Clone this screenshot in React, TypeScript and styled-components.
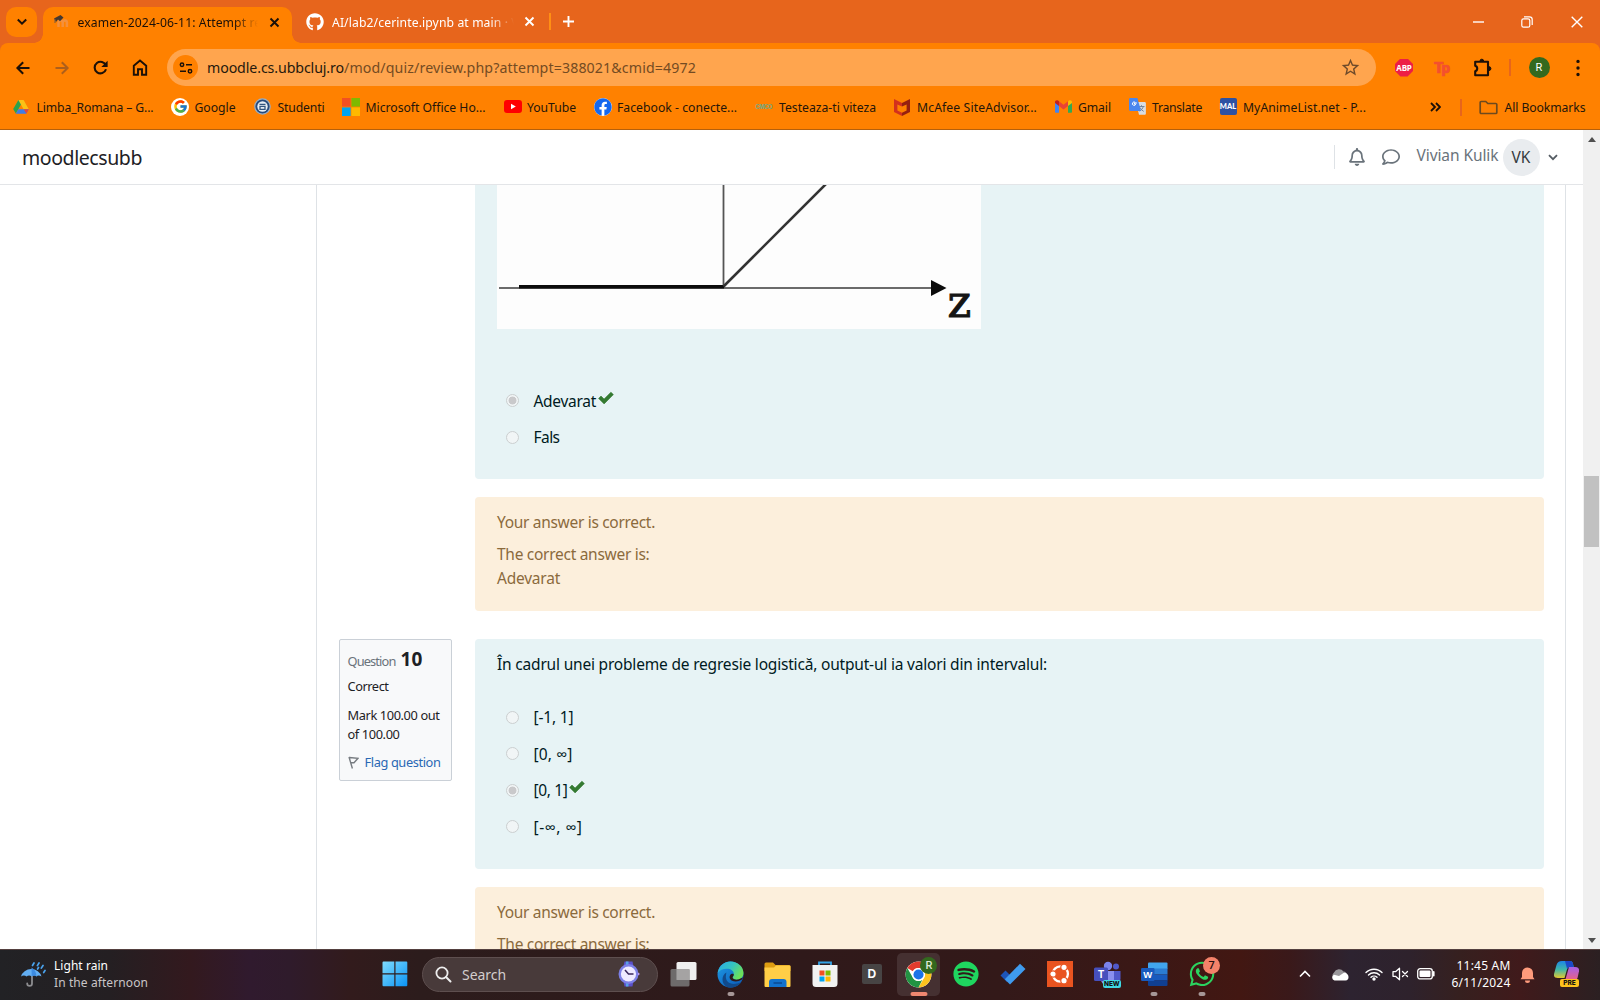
import React, { useLayoutEffect, useRef, useState } from "react";
import styled, { createGlobalStyle } from "styled-components";
import { FaFacebook, FaGithub, FaRegBell, FaRegComment, FaSpotify, FaWhatsapp } from "react-icons/fa";
import { FcGoogle } from "react-icons/fc";
import { MdStarBorder } from "react-icons/md";

const UI_FONT = `"Segoe UI", "Noto Sans", "Open Sans", sans-serif`;

const Global = createGlobalStyle`
  * { box-sizing: border-box; }
  html, body { margin: 0; padding: 0; background: #fff; }
  body { font-family: ${UI_FONT}; overflow: hidden; }
  svg { display: block; flex: none; }
`;

/* ---------- text set to a known measure ---------- */

const Run = styled.span<{ $size: number; $color?: string; $weight?: number; $w: number; $top?: number }>`
  display: block;
  flex: none;
  width: ${(p) => p.$w}px;
  margin-top: ${(p) => p.$top ?? 0}px;
  font-size: ${(p) => p.$size}px;
  font-weight: ${(p) => p.$weight ?? 400};
  color: ${(p) => p.$color ?? "inherit"};
  line-height: 1.5;
  white-space: pre;
`;

type TextProps = { w: number; size: number; color?: string; weight?: number; top?: number; children: string };

function Text({ w, size, color, weight, top, children }: TextProps) {
  const ref = useRef<HTMLSpanElement>(null);
  const [tracking, setTracking] = useState(0);
  useLayoutEffect(() => {
    const el = ref.current;
    if (!el) return;
    const range = document.createRange();
    range.selectNodeContents(el);
    setTracking((w - range.getBoundingClientRect().width) / children.length);
  }, [w, children]);
  return (
    <Run ref={ref} $w={w} $size={size} $color={color} $weight={weight} $top={top} style={{ letterSpacing: tracking }}>
      {children}
    </Run>
  );
}

/* ---------- window ---------- */

const Screen = styled.div`
  width: 1600px;
  height: 1000px;
  display: flex;
  flex-direction: column;
  overflow: hidden;
  background: #fff;
`;

const Gap = styled.div<{ $w: number }>`
  flex: none;
  width: ${(p) => p.$w}px;
`;

const Spacer = styled.div`
  flex: 1;
`;

const TabStrip = styled.div`
  height: 43px;
  flex: none;
  display: flex;
  align-items: center;
  padding-left: 6px;
  background: #e7651c;
  color: #fff;
`;

const TabSearch = styled.div`
  width: 31px;
  height: 30px;
  border-radius: 10px;
  background: #ff8100;
  color: #1b1008;
  display: flex;
  align-items: center;
  justify-content: center;
`;

const ActiveTab = styled.div`
  position: relative;
  align-self: flex-end;
  margin-left: 6px;
  width: 249px;
  height: 36px;
  padding: 0 8px 6px 10px;
  border-radius: 10px 10px 0 0;
  background: #ff8100;
  display: flex;
  align-items: center;
  color: #1b1008;
  &::before,
  &::after {
    content: "";
    position: absolute;
    bottom: 0;
    width: 9px;
    height: 9px;
  }
  &::before {
    left: -9px;
    background: radial-gradient(circle at 0 0, transparent 8.5px, #ff8100 9px);
  }
  &::after {
    right: -9px;
    background: radial-gradient(circle at 100% 0, transparent 8.5px, #ff8100 9px);
  }
`;

const Clip = styled.div<{ $w: number }>`
  width: ${(p) => p.$w}px;
  flex: none;
  overflow: hidden;
  mask-image: linear-gradient(to right, #000 calc(100% - 24px), transparent);
`;

const Rule = styled.div<{ $h: number; $color: string; $w?: number }>`
  flex: none;
  width: ${(p) => p.$w ?? 2}px;
  height: ${(p) => p.$h}px;
  background: ${(p) => p.$color};
`;

const ToolbarBack = styled.div`
  flex: none;
  background: #e7651c;
`;

const Toolbar = styled.div`
  height: 49px;
  display: flex;
  align-items: center;
  padding-left: 13px;
  background: #ff8100;
  border-radius: 8px 8px 0 0;
  color: #1b1008;
`;

const Omnibox = styled.div`
  width: 1209px;
  height: 37px;
  border-radius: 19px;
  background: #ffa54e;
  display: flex;
  align-items: center;
  padding: 0 15px 0 6px;
`;

const SiteInfo = styled.div`
  width: 25px;
  height: 25px;
  border-radius: 50%;
  background: #ff8100;
  display: flex;
  align-items: center;
  justify-content: center;
`;

const Abp = styled.div`
  width: 18px;
  height: 18px;
  background: #ed1e45;
  clip-path: polygon(30% 0, 70% 0, 100% 30%, 100% 70%, 70% 100%, 30% 100%, 0 70%, 0 30%);
  color: #fff;
  font: 700 8px/18px "Open Sans", sans-serif;
  text-align: center;
  letter-spacing: -0.2px;
`;

const Tp = styled.div`
  width: 17px;
  font: 900 15px/18px Roboto, sans-serif;
  letter-spacing: -1.2px;
  color: #f4502e;
  -webkit-text-stroke: 0.7px #f4502e;
`;

const Profile = styled.div`
  width: 21px;
  height: 21px;
  border-radius: 50%;
  background: #33691e;
  color: #fff;
  font: 400 11px/21px Roboto, sans-serif;
  text-align: center;
`;

const Bookmarks = styled.div`
  height: 38px;
  flex: none;
  display: flex;
  align-items: center;
  padding: 0 0 7px 13px;
  background: #ff8100;
  border-bottom: 1px solid #b5600c;
  color: #25160a;
`;

const BookmarkItem = styled.div<{ $w: number }>`
  flex: none;
  width: ${(p) => p.$w}px;
  display: flex;
  align-items: center;
`;

const BookmarkIcon = styled.div`
  flex: none;
  width: 23.5px;
`;

const Disc = styled.div`
  width: 18px;
  height: 18px;
  border-radius: 50%;
  background: #fff;
  display: flex;
  align-items: center;
  justify-content: center;
`;

const Mal = styled.div`
  width: 17px;
  height: 17px;
  border-radius: 2px;
  background: #2e51a2;
  color: #fff;
  font: 900 7.5px/17px Lato, sans-serif;
  text-align: center;
`;

const Cmco = styled.div`
  width: 17px;
  font: 800 5.5px/8px Inter, sans-serif;
  letter-spacing: -0.2px;
  color: #7aa67c;
`;

/* ---------- page ---------- */

const Viewport = styled.div`
  flex: 1;
  min-height: 0;
  display: flex;
`;

const Document = styled.div`
  width: 1583px;
  display: flex;
  flex-direction: column;
`;

const SiteHeader = styled.header`
  height: 55px;
  flex: none;
  border-bottom: 1px solid #e3e5e8;
  display: flex;
  align-items: center;
  padding-left: 22px;
  color: #6a737b;
`;

const UserInitials = styled.div`
  width: 37px;
  height: 37px;
  margin-left: 4px;
  border-radius: 50%;
  background: #e9ecef;
  color: #343a40;
  display: flex;
  align-items: center;
  justify-content: center;
`;

const Body = styled.main`
  flex: 1;
  min-height: 0;
  overflow: hidden;
  margin: 0 17px 0 316px;
  border: 0 solid #dee2e6;
  border-width: 0 1px;
  padding: 0 21px 0 22px;
`;

const Question = styled.section`
  display: flex;
  align-items: flex-start;
  margin-bottom: 28px;
`;

const InfoColumn = styled.div`
  width: 136px;
  flex: none;
`;

const InfoCard = styled.div`
  width: 113px;
  height: 142px;
  border: 1px solid #cad0d7;
  border-radius: 2px;
  background: #f8f9fa;
  padding: 0 7.5px;
  color: #1d2125;
`;

const InfoLine = styled.div<{ $h: number }>`
  height: ${(p) => p.$h}px;
  display: flex;
  align-items: center;
`;

const QuestionColumn = styled.div`
  flex: 1;
`;

const Formulation = styled.div<{ $h: number; $cut?: boolean }>`
  height: ${(p) => p.$h}px;
  padding: 0 22px;
  border-radius: ${(p) => (p.$cut ? "0 0 4px 4px" : "4px")};
  background: #e7f3f5;
  color: #001a1e;
`;

const Feedback = styled.div`
  height: 114px;
  margin-top: 18px;
  padding: 14px 22px 0;
  border-radius: 4px;
  background: #fcefdc;
  color: #8b6a3c;
`;

const Line = styled.div<{ $after?: number }>`
  height: 24px;
  margin-bottom: ${(p) => p.$after ?? 0}px;
  display: flex;
  align-items: center;
`;

const Figure = styled.svg`
  width: 484px;
  height: 144px;
  background: #fdfdfd;
`;

const Answers = styled.div<{ $top: number }>`
  padding: ${(p) => p.$top}px 0 0 9px;
`;

const Answer = styled.div`
  height: 36.4px;
  display: flex;
  align-items: center;
`;

const Radio = styled.div<{ $on?: boolean }>`
  width: 13px;
  height: 13px;
  margin-right: 14.5px;
  border: 1px solid #cbcfd0;
  border-radius: 50%;
  background: ${(p) => (p.$on ? "radial-gradient(circle, #c9c9cb 3.6px, #f1f5f6 4.3px)" : "#f1f5f6")};
`;

const Tick = styled.div`
  margin: -6px 0 0 1.5px;
`;

const ScrollTrack = styled.div`
  width: 17px;
  background: #f0f0f0;
  display: flex;
  flex-direction: column;
  align-items: center;
`;

const ScrollArrow = styled.div<{ $down?: boolean }>`
  width: 0;
  height: 0;
  margin: ${(p) => (p.$down ? "auto 0 6px" : "7px 0 0")};
  border: 4px solid transparent;
  border-width: ${(p) => (p.$down ? "5px 4px 0" : "0 4px 5px")};
  border-color: ${(p) => (p.$down ? "#505050 transparent transparent" : "transparent transparent #505050")};
`;

const Thumb = styled.div`
  width: 15px;
  height: 71px;
  margin-top: 334px;
  background: #c1c1c1;
`;

/* ---------- taskbar ---------- */

const Taskbar = styled.footer`
  height: 51px;
  flex: none;
  display: flex;
  align-items: center;
  padding: 0 0 2px 20px;
  border-top: 1px solid #54403f;
  background: linear-gradient(90deg, #222225 0, #241f22 110px, #33191e 190px, #301a2e 250px, #2f1b2b 290px, #321b1c 350px, #2c1c1c 420px, #2f191a 800px, #331919 1000px, #3a1816 1130px, #421712 1240px, #3a191a 1290px, #2d2330 1350px, #2e222c 1410px, #36201f 1460px, #401a1b 1520px, #2b2022 1600px);
  color: #fff;
`;

const TwoLines = styled.div<{ $right?: boolean }>`
  display: flex;
  flex-direction: column;
  align-items: ${(p) => (p.$right ? "flex-end" : "flex-start")};
`;

const ShortLine = styled.div`
  height: 17px;
  display: flex;
  align-items: center;
`;

const SearchPill = styled.div`
  width: 236px;
  height: 35px;
  border-radius: 18px;
  border: 1px solid #5e4f4f;
  background: #483a3a;
  display: flex;
  align-items: center;
  padding: 0 16px 0 12px;
`;

const AppSlot = styled.div<{ $active?: boolean }>`
  position: relative;
  flex: none;
  width: 43px;
  height: 43px;
  margin-right: 4.1px;
  border-radius: 5px;
  display: flex;
  align-items: center;
  justify-content: center;
  background: ${(p) => (p.$active ? "#453031" : "transparent")};
`;

const Running = styled.div<{ $active?: boolean }>`
  position: absolute;
  bottom: 0;
  left: 50%;
  transform: translateX(-50%);
  width: ${(p) => (p.$active ? 17 : 7)}px;
  height: 4px;
  border-radius: 2px;
  background: ${(p) => (p.$active ? "#f08770" : "#a69797")};
`;

const Badge = styled.div<{ $bg: string; $fg: string }>`
  position: absolute;
  top: 4px;
  right: 3px;
  width: 17px;
  height: 17px;
  border-radius: 50%;
  background: ${(p) => p.$bg};
  color: ${(p) => p.$fg};
  font: 500 11px/17px Roboto, sans-serif;
  text-align: center;
`;

const Pill = styled.div<{ $bg: string; $w: number }>`
  position: absolute;
  width: ${(p) => p.$w}px;
  height: 8px;
  border-radius: 2px;
  background: ${(p) => p.$bg};
  color: #111;
  font: 800 6.5px/8px Inter, sans-serif;
  text-align: center;
`;

const NewPill = styled(Pill)`
  left: 17px;
  bottom: 8px;
`;

const PrePill = styled(Pill)`
  left: 6px;
  bottom: 0;
`;

const LetterTile = styled.div`
  width: 20px;
  height: 20px;
  border-radius: 2px;
  background: #474444;
  color: #fff;
  font: 700 12px/20px "Liberation Sans", sans-serif;
  text-align: center;
`;

const Copilot = styled.div`
  position: relative;
  width: 26px;
  height: 26px;
`;

/* ---------- drawings ---------- */

const Svg = ({ w, h, box, children }: { w: number; h: number; box?: string; children: React.ReactNode }) => (
  <svg width={w} height={h} viewBox={box ?? `0 0 ${w} ${h}`} fill="none">
    {children}
  </svg>
);

const CloseIcon = () => (
  <Svg w={15} h={15}><path d="M3.500 3.500l8 8M11.500 3.500l-8 8" stroke="currentColor" strokeWidth="1.900" /></Svg>
);

const PlusIcon = () => (
  <Svg w={17} h={17}><path d="M8.500 3v11M3 8.500h11" stroke="currentColor" strokeWidth="1.900" /></Svg>
);

const DownIcon = () => (
  <Svg w={12} h={8}><path d="M1.800 1.500L6 5.700l4.200-4.200" stroke="currentColor" strokeWidth="2" /></Svg>
);

const BackIcon = () => (
  <Svg w={20} h={20}><path d="M16.500 10H5M10.200 4.200L4.400 10l5.800 5.800" stroke="currentColor" strokeWidth="2" /></Svg>
);

const ForwardIcon = () => (
  <Svg w={20} h={20}><path d="M3.500 10H15M9.800 4.200l5.800 5.800-5.800 5.800" stroke="#ad5f1b" strokeWidth="2" /></Svg>
);

const ReloadIcon = () => (
  <Svg w={21} h={21}>
    <path d="M15.900 8.600A5.800 5.800 0 1 0 16 12.300" stroke="currentColor" strokeWidth="2.100" />
    <path d="M17.600 3.800v6.300h-6.300z" fill="currentColor" />
  </Svg>
);

const CheckIcon = () => (
  <Svg w={16} h={14}>
    <path d="M.6 7.400L3 5l3.100 3.100L12.900 1.200l2.500 2.400-9.300 9.300z" fill="#357a32" stroke="#357a32" strokeWidth=".6" strokeLinejoin="round" />
  </Svg>
);

const DriveIcon = () => (
  <Svg w={16} h={16}>
    <path d="M5.4 1h5.2L5.3 10.3 2.8 14.6.2 10z" fill="#2ba24c" />
    <path d="M5.4 1h5.2l5.2 9.2h-5.2z" fill="#fbc116" />
    <path d="M5.3 10.2h10.5l-2.6 4.5H2.8z" fill="#3f7de8" />
    <path d="M10.7 10.2h5.1l-2.5 4.4z" fill="#e8453c" />
  </Svg>
);

const StudentiIcon = () => (
  <Svg w={17} h={17}>
    <circle cx="8.500" cy="8.500" r="7.700" fill="#274b7c" stroke="#9fb0c2" strokeWidth="1.200" />
    <circle cx="8.500" cy="8.500" r="5.200" fill="#e8eef4" />
    <path d="M5.500 6.300h6M6 8.300h5v3H6z" stroke="#33567f" strokeWidth="1.300" />
  </Svg>
);

const MicrosoftIcon = () => (
  <Svg w={18} h={18}>
    <path d="M0 0h8.600v8.600H0z" fill="#f25022" />
    <path d="M9.400 0H18v8.600H9.400z" fill="#7fba00" />
    <path d="M0 9.400h8.600V18H0z" fill="#00a4ef" />
    <path d="M9.400 9.400H18V18H9.400z" fill="#ffb900" />
  </Svg>
);

const YouTubeIcon = () => (
  <Svg w={18} h={13}>
    <rect width="18" height="13" rx="3" fill="#f00" />
    <path d="M7 3.800v5.400l4.800-2.700z" fill="#fff" />
  </Svg>
);

const McAfeeIcon = () => (
  <Svg w={16} h={18}>
    <path d="M0 1l8 4v3.600L3.400 6.400v6.200L8 14.800V18l-8-4z" fill="#d3301d" />
    <path d="M16 1L8 5v3.600l4.600-2.200v6.200L8 14.800V18l8-4z" fill="#96200f" />
  </Svg>
);

const GmailIcon = () => (
  <Svg w={17} h={13}>
    <path d="M0 2v9.700c0 .6.500 1.100 1.100 1.100H4V5z" fill="#4285f4" />
    <path d="M17 2v9.700c0 .6-.5 1.100-1.100 1.100H13V5z" fill="#34a853" />
    <path d="M13 1.400V6l4-3V2c0-1.600-1.800-2.300-3-1.500z" fill="#fbbc04" />
    <path d="M4 6V1.300l4.500 3.400L13 1.300V6L8.500 9.400z" fill="#ea4335" />
    <path d="M0 2v1l4 3V1.300L3 .5C1.700-.3 0 .5 0 2z" fill="#c5221f" />
  </Svg>
);

const TranslateIcon = () => (
  <Svg w={17} h={17}>
    <path d="M7 4h8.500c.8 0 1.400.6 1.400 1.400v10c0 .8-.6 1.400-1.400 1.400H10z" fill="#d9dde3" />
    <path d="M9.500 8.500h6M12.500 7.200v1.300M14.300 8.500c-.6 2.200-2 3.700-3.800 4.700M11 9.500c.8 1.700 2 3 3.700 3.900" stroke="#6b7f95" strokeWidth=".9" />
    <path d="M1.400 0h7L12 12.900H1.400C.6 12.900 0 12.300 0 11.500v-10C0 .7.600 0 1.400 0z" fill="#4a86ee" />
    <path d="M7.900 5H5.400v1.200h1.300a1.700 1.700 0 1 1-.4-1.700" stroke="#fff" strokeWidth="1" />
  </Svg>
);

const MoodleFavicon = () => (
  <Svg w={16} h={16}>
    <path d="M5.500 13V8.500a2 2 0 0 1 4.200 0V13M9.700 8.500a2 2 0 0 1 4.200 0V13" stroke="#f4903c" strokeWidth="2.500" />
    <path d="M1 4.500L7.500 1l3 2.500L7 7.200 5 5.500 3 8z" fill="#46382f" />
    <path d="M2 5v4" stroke="#7b5a3c" />
  </Svg>
);

const HomeIcon = () => (
  <Svg w={16} h={17}>
    <path d="M1.800 6.800L8 1.600l6.200 5.200V15.800H10V10.200H6v5.600H1.800z" stroke="currentColor" strokeWidth="1.900" />
  </Svg>
);

const TuneIcon = () => (
  <Svg w={14} h={14}>
    <circle cx="3" cy="3.800" r="1.700" stroke="currentColor" strokeWidth="1.500" />
    <path d="M7 3.800h6M1 10.200h6" stroke="currentColor" strokeWidth="1.600" />
    <circle cx="11" cy="10.200" r="1.700" stroke="currentColor" strokeWidth="1.500" />
  </Svg>
);

const PuzzleIcon = () => (
  <Svg w={19} h={20}>
    <path d="M2.200 3.800H15v13.500H2.200V13.300c2.700-.8 2.700-4.700 0-5.500z" stroke="currentColor" strokeWidth="2.100" strokeLinejoin="round" />
    <path d="M7 3a1.800 1.800 0 0 1 3.600 0zM16 8.700a1.900 1.900 0 0 1 0 3.800z" fill="currentColor" stroke="currentColor" />
  </Svg>
);

const WeatherIcon = () => (
  <Svg w={26} h={27}>
    <path d="M12 15.500v7a2.400 2.400 0 0 1-4.800 0" stroke="#8d8d90" strokeWidth="1.800" strokeLinecap="round" />
    <path d="M1 15.500A10.500 9.500 0 0 1 21.500 15.500c-2-1.200-4-1.200-5 0-1.400-1.200-3-1.200-4.800 0-1.700-1.200-3.600-1.200-5.200 0-1.500-1.200-3.700-1.200-5.500 0z" fill="#62aef2" />
    <path d="M11.500 6.500c3 1.500 4.800 5 5 9-1.400-1.200-3-1.200-4.800 0z" fill="#3d8be0" />
    <path d="M14 2l-1.500 2.500M19 2l-1.600 2.600M23 4.500l-1.700 2.600M18.500 6.500L17.600 8M25 9.500l-1.300 2" stroke="#4aa3ee" strokeWidth="1.700" strokeLinecap="round" />
  </Svg>
);

const StartIcon = () => (
  <Svg w={26} h={26}>
    <defs>
      <linearGradient id="start" x1="0" y1="0" x2="1" y2="1">
        <stop offset="0" stopColor="#7fdcfd" />
        <stop offset="1" stopColor="#0a93f5" />
      </linearGradient>
    </defs>
    <path d="M.5 1.500a1 1 0 0 1 1-1h10.800v11.800H.5zM13.500.5h10.800a1 1 0 0 1 1 1v10.800H13.500zM.5 13.500h11.800v11.800H1.500a1 1 0 0 1-1-1zM13.500 13.500h11.800v10.800a1 1 0 0 1-1 1H13.500z" fill="url(#start)" />
  </Svg>
);

const WatchIcon = () => (
  <Svg w={24} h={28}>
    <path d="M7.500 1.500h8l1.200 6H6.200zM6.200 20h10.500l-1.200 6.500h-8z" fill="#5b50c9" />
    <path d="M9 1.500h2.500v6H8.500zM8.500 20h3v6.500H9z" fill="#56a4e6" />
    <circle cx="11.500" cy="14" r="10" fill="#7c7fe6" />
    <path d="M21 12.500l2 1.500-2 1.500z" fill="#c39af2" />
    <circle cx="11.500" cy="14" r="7.600" fill="#eeeaff" />
    <path d="M8 10l3.500 4h5" stroke="#38265c" strokeWidth="1.500" />
  </Svg>
);

const TaskViewIcon = () => (
  <Svg w={27} h={25}>
    <rect x="6.500" y="0" width="20" height="18" rx="1.500" fill="#efefef" />
    <rect x="0.500" y="7" width="19" height="17.500" rx="1.500" fill="#727070" fillOpacity=".95" />
    <path d="M6.500 7h13v11h-13z" fill="#a5a3a3" />
  </Svg>
);

const EdgeIcon = () => (
  <Svg w={27} h={27} box="0 0 26 26">
    <defs>
      <linearGradient id="edgeTop" x1="0" y1="0" x2="1" y2=".5">
        <stop offset="0" stopColor="#2aa8e8" />
        <stop offset=".55" stopColor="#35c5c0" />
        <stop offset="1" stopColor="#6ce05a" />
      </linearGradient>
      <linearGradient id="edgeLow" x1="0" y1="0" x2="1" y2="1">
        <stop offset="0" stopColor="#1e9be6" />
        <stop offset="1" stopColor="#0b57b5" />
      </linearGradient>
    </defs>
    <circle cx="13" cy="13" r="12.500" fill="url(#edgeLow)" />
    <path d="M8.500 15c0 5.500 5 9.500 15 5.500C20 25 14 27 9.500 25 4 22 4 14 9 11z" fill="#114a8b" />
    <path d="M.7 11.500C2 4.500 7 .5 13 .5c7 0 12.500 5 12.500 11 0 4.200-3 6.500-6.500 6.500-2.600 0-4-1-4-2 0-1.200 1.200-1.300 1.200-3.500 0-3-3-5-6.700-5C5.500 7.500 2.500 9 .7 11.500z" fill="url(#edgeTop)" />
    <path d="M14 18.800c-2-1.300-2.300-3.500-1.300-5.300.9-1.500 3.400-1.500 3.500-.5 0 1.500-1.200 2-1.200 3 0 1.300 2.500 2.400 5.500 1.900l4.300-1.900c.6 2-5.500 5.500-10.800 2.800z" fill="#2c1a1b" />
  </Svg>
);

const ExplorerIcon = () => (
  <Svg w={27} h={25}>
    <path d="M.5 2a1.500 1.500 0 0 1 1.500-1.500h7L11.500 3H25a1.500 1.500 0 0 1 1.500 1.500V9H.5z" fill="#dd9d12" />
    <path d="M.5 5.500h9.500L12 3.500h13.500a1 1 0 0 1 1 1V24a1 1 0 0 1-1 1h-24a1 1 0 0 1-1-1z" fill="#ffce47" />
    <path d="M5 25v-5a3 3 0 0 1 3-3h11.500a3 3 0 0 1 3 3v5z" fill="#1272cd" />
    <path d="M9.500 21h8.500" stroke="#0b4a91" strokeWidth="1.500" />
  </Svg>
);

const StoreIcon = () => (
  <Svg w={26} h={27}>
    <path d="M7 5.500V1.500h12v4" stroke="#35a3e6" strokeWidth="1.800" />
    <path d="M.5 4h25v18.500a3.500 3.500 0 0 1-3.500 3.500H4a3.500 3.500 0 0 1-3.500-3.500z" fill="#f2f2f2" />
    <path d="M7.500 9.500h5v5h-5z" fill="#f25022" />
    <path d="M13.500 9.500h5v5h-5z" fill="#7fba00" />
    <path d="M7.500 15.500h5v5h-5z" fill="#00a4ef" />
    <path d="M13.500 15.500h5v5h-5z" fill="#ffb900" />
  </Svg>
);

const ChromeIcon = () => (
  <Svg w={27} h={27} box="0 0 48 48">
    <circle cx="24" cy="24" r="23" fill="#fff" />
    <path d="M4.100 12.500A23 23 0 0 1 43.900 12.500H24a11.500 11.500 0 0 0-10 5.800z" fill="#e33b2e" />
    <path d="M43.900 12.500A23 23 0 0 1 24 47L34 29.800a11.500 11.500 0 0 0 0-11.500 11.500 11.500 0 0 0-10-5.800z" fill="#fcc31e" />
    <path d="M24 47A23 23 0 0 1 4.100 12.500L14 29.800a11.500 11.500 0 0 0 10 5.700 11.500 11.500 0 0 0 6.800-2.200z" fill="#229342" />
    <circle cx="24" cy="24" r="11.500" fill="#fff" />
    <circle cx="24" cy="24" r="9" fill="#1a73e8" />
  </Svg>
);

const TodoIcon = () => (
  <Svg w={26} h={22}>
    <path d="M.5 12.500L5.500 7.500 12 14l-5 5z" fill="#1d55b8" />
    <path d="M4.800 16.300L20 .8l5.500 5.200L10 21.500z" fill="#3f9bee" />
  </Svg>
);

const UbuntuIcon = () => (
  <Svg w={26} h={26}>
    <rect width="26" height="26" fill="#e95420" />
    <circle cx="13.300" cy="13" r="7.600" stroke="#fff" strokeWidth="2.300" />
    <g fill="#fff" stroke="#e95420" strokeWidth="1.200">
      <circle cx="6" cy="13" r="3.200" />
      <circle cx="17" cy="6.300" r="3.200" />
      <circle cx="17" cy="19.700" r="3.200" />
    </g>
  </Svg>
);

const TeamsIcon = () => (
  <Svg w={27} h={26}>
    <circle cx="14" cy="5" r="4.200" fill="#7b83eb" />
    <circle cx="22" cy="5.500" r="3" fill="#5059c9" />
    <path d="M17 10h9.500v8a5 5 0 0 1-5 4.500H17z" fill="#5059c9" />
    <path d="M7 10h13v8c0 4-3 6.500-6.500 6.500S7 22 7 18z" fill="#8a90ee" />
    <rect x="0" y="6.500" width="14" height="13.500" rx="1.500" fill="#4650bd" />
    <text x="7" y="17" textAnchor="middle" fontFamily="Liberation Sans, sans-serif" fontWeight="700" fontSize="10" fill="#fff">T</text>
  </Svg>
);

const WordIcon = () => (
  <Svg w={27} h={25}>
    <path d="M7 1.500A1 1 0 0 1 8 .5h17.500a1 1 0 0 1 1 1V7H7z" fill="#41a5ee" />
    <path d="M7 6.500h19.500v6H7z" fill="#2b7cd3" />
    <path d="M7 12.500h19.500v6H7z" fill="#185abd" />
    <path d="M7 18.300h19.500V23a1 1 0 0 1-1 1H8a1 1 0 0 1-1-1z" fill="#103f91" />
    <rect x="0" y="6" width="13.500" height="13" rx="1.200" fill="#185abd" />
    <text x="6.800" y="16" textAnchor="middle" fontFamily="Liberation Sans, sans-serif" fontWeight="700" fontSize="9.500" fill="#fff">W</text>
  </Svg>
);

const CloudIcon = () => (
  <Svg w={18} h={13}>
    <path d="M4.500 11A3.600 3.600 0 0 1 3 4.500 5.500 5.500 0 0 1 12.500 3.500 4 4 0 0 1 16 7z" fill="#9a979b" />
    <path d="M3.500 12.500A3 3 0 0 1 3 6.800L8 8l4.500-3a4 4 0 0 1 5 3.700 3.500 3.500 0 0 1-3 3.800z" fill="#fff" />
  </Svg>
);

const WifiIcon = () => (
  <Svg w={18} h={14}>
    <path d="M1 5.500a11.300 11.300 0 0 1 16 0M3.500 8a7.800 7.800 0 0 1 11 0M6 10.300a4.300 4.300 0 0 1 6 0" stroke="#fff" strokeWidth="1.400" strokeLinecap="round" />
    <circle cx="9" cy="12" r="1.700" fill="#fff" />
  </Svg>
);

const MutedIcon = () => (
  <Svg w={17} h={14}>
    <path d="M1 4.700h2.500L7.500 1.200v11.600L3.500 9.300H1z" stroke="#fff" strokeWidth="1.300" strokeLinejoin="round" />
    <path d="M10.500 4.500l5 5M15.500 4.500l-5 5" stroke="#fff" strokeWidth="1.300" strokeLinecap="round" />
  </Svg>
);

const BatteryIcon = () => (
  <Svg w={18} h={12}>
    <rect x=".7" y=".7" width="14.600" height="10.200" rx="2.500" stroke="#fff" strokeWidth="1.300" />
    <rect x="2.500" y="2.500" width="11" height="6.600" rx="1" fill="#fff" />
    <path d="M16.700 4v3.600" stroke="#fff" strokeWidth="1.800" strokeLinecap="round" />
  </Svg>
);

const AlertBell = () => (
  <Svg w={15} h={17}>
    <path d="M2 7a5.500 5.500 0 0 1 11 0v4l1.500 2.200H.5L2 11zM5 14.500h5a2.500 2.500 0 0 1-5 0z" fill="#ff9b7c" />
  </Svg>
);

const CopilotMark = () => (
  <Svg w={26} h={24}>
    <defs>
      <linearGradient id="coLeft" x1="0" y1="0" x2="0" y2="1">
        <stop offset="0" stopColor="#1c86e6" />
        <stop offset=".5" stopColor="#3fb6a8" />
        <stop offset="1" stopColor="#e5c92f" />
      </linearGradient>
      <linearGradient id="coRight" x1="0" y1="0" x2="0" y2="1">
        <stop offset="0" stopColor="#a560e8" />
        <stop offset="1" stopColor="#f0627c" />
      </linearGradient>
    </defs>
    <path d="M15 6h6c3 0 4.500 1.600 4 4.200l-1.300 6C23 19 21.500 20 19 20h-8z" fill="url(#coRight)" />
    <path d="M8 0h8c2.200 0 3 1.500 3.700 6H16c-2 0-2.600 1-3.200 3L10.500 17H4c-3.500 0-4.500-1.500-4-4L2.500 4C3.300 1.300 5 0 8 0z" fill="url(#coLeft)" />
    <path d="M11 0h5c2.200 0 3 1.500 3.700 6H16c-1.500 0-2.300.6-2.900 2z" fill="#1b49c8" />
  </Svg>
);

/* ---------- data ---------- */

type Mark = { icon: React.ReactNode; label: string; w: number; step: number };

const BOOKMARKS: Mark[] = [
  { icon: <DriveIcon />, label: "Limba_Romana – G...", w: 117, step: 158 },
  { icon: <Disc><FcGoogle size={15} /></Disc>, label: "Google", w: 41, step: 83 },
  { icon: <StudentiIcon />, label: "Studenti", w: 47, step: 88 },
  { icon: <MicrosoftIcon />, label: "Microsoft Office Ho...", w: 120, step: 161.5 },
  { icon: <YouTubeIcon />, label: "YouTube", w: 49, step: 90 },
  { icon: <Disc><FaFacebook size={18} color="#1568ee" /></Disc>, label: "Facebook - conecte...", w: 120, step: 162 },
  { icon: <Cmco>CMCO</Cmco>, label: "Testeaza-ti viteza", w: 97, step: 138 },
  { icon: <McAfeeIcon />, label: "McAfee SiteAdvisor...", w: 120, step: 161 },
  { icon: <GmailIcon />, label: "Gmail", w: 33, step: 74 },
  { icon: <TranslateIcon />, label: "Translate", w: 50, step: 91 },
  { icon: <Mal>MAL</Mal>, label: "MyAnimeList.net - P...", w: 123, step: 210 },
];

type Choice = { label: string; w: number; on?: boolean };

const Choices = ({ items, top }: { items: Choice[]; top: number }) => (
  <Answers $top={top}>
    {items.map((c) => (
      <Answer key={c.label}>
        <Radio $on={c.on} />
        <Text size={15.5} w={c.w} top={1}>{c.label}</Text>
        {c.on && <Tick><CheckIcon /></Tick>}
      </Answer>
    ))}
  </Answers>
);

const CorrectNote = ({ answer, w }: { answer?: string; w?: number }) => (
  <Feedback>
    <Line $after={8}><Text size={15.5} w={158}>Your answer is correct.</Text></Line>
    <Line><Text size={15.5} w={152.5}>The correct answer is:</Text></Line>
    {answer && <Line><Text size={15.5} w={w ?? 60}>{answer}</Text></Line>}
  </Feedback>
);

const ReluFigure = () => (
  <Figure viewBox="497 185 484 144">
    <path d="M499 288H934" stroke="#6b6b6b" strokeWidth="1.800" />
    <path d="M723.500 185V288" stroke="#555" strokeWidth="1.800" />
    <path d="M519 286.700H724" stroke="#0c0c0c" strokeWidth="3.600" />
    <path d="M723.500 286.500L826 184" stroke="#333" strokeWidth="2.600" />
    <path d="M931 280v16l15.500-8z" fill="#0c0c0c" />
    <text x="947.500" y="316.500" fontFamily="DejaVu Serif, serif" fontSize="45" fill="#151515" stroke="#151515" strokeWidth="1">z</text>
  </Figure>
);

/* ---------- app ---------- */

export default function App() {
  return (
    <Screen>
      <Global />
      <TabStrip>
        <TabSearch><DownIcon /></TabSearch>
        <ActiveTab>
          <MoodleFavicon />
          <Gap $w={8.5} />
          <Clip $w={180}><Text size={12.2} w={193} top={2}>examen-2024-06-11: Attempt revi</Text></Clip>
          <Gap $w={9} />
          <CloseIcon />
        </ActiveTab>
        <Gap $w={14} />
        <FaGithub size={18} />
        <Gap $w={8} />
        <Clip $w={182}><Text size={12.2} w={190} top={3}>AI/lab2/cerinte.ipynb at main · Vi</Text></Clip>
        <Gap $w={8} />
        <CloseIcon />
        <Gap $w={12} />
        <Rule $h={17} $color="#ff8f14" />
        <Gap $w={9} />
        <PlusIcon />
        <Spacer />
        <Svg w={12} h={12}><path d="M0 6h11" stroke="#fff" strokeWidth="1.400" /></Svg>
        <Gap $w={36} />
        <Svg w={12} h={12}>
          <rect x=".8" y="2.800" width="8" height="8.400" rx="1.800" stroke="#fff" strokeWidth="1.200" />
          <path d="M3 .8h5.500A2.700 2.700 0 0 1 11.200 3.500V9" stroke="#fff" strokeWidth="1.200" />
        </Svg>
        <Gap $w={37.5} />
        <Svg w={12} h={12}><path d="M.7.7l10.600 10.600M11.300.7L.7 11.300" stroke="#fff" strokeWidth="1.400" /></Svg>
        <Gap $w={17.5} />
      </TabStrip>

      <ToolbarBack>
        <Toolbar>
          <BackIcon />
          <Gap $w={19} />
          <ForwardIcon />
          <Gap $w={18} />
          <ReloadIcon />
          <Gap $w={20.5} />
          <HomeIcon />
          <Gap $w={19.5} />
          <Omnibox>
            <SiteInfo><TuneIcon /></SiteInfo>
            <Gap $w={9} />
            <Text size={14.2} w={137} color="#26190d">moodle.cs.ubbcluj.ro</Text>
            <Text size={14.2} w={352} color="#744b22">/mod/quiz/review.php?attempt=388021&amp;cmid=4972</Text>
            <Spacer />
            <MdStarBorder size={21} color="#6d4a2a" />
          </Omnibox>
          <Gap $w={19} />
          <Abp>ABP</Abp>
          <Gap $w={21} />
          <Tp>Tp</Tp>
          <Gap $w={22} />
          <PuzzleIcon />
          <Gap $w={17} />
          <Rule $h={17} $color="#e7651c" />
          <Gap $w={17.5} />
          <Profile>R</Profile>
          <Gap $w={26} />
          <Svg w={4} h={18}><path d="M2 2.400v.01M2 9v.01M2 15.500v.01" stroke="currentColor" strokeWidth="3.400" strokeLinecap="round" /></Svg>
        </Toolbar>
      </ToolbarBack>

      <Bookmarks>
        {BOOKMARKS.map((b) => (
          <BookmarkItem key={b.label} $w={b.step}>
            <BookmarkIcon>{b.icon}</BookmarkIcon>
            <Text size={12.2} w={b.w} top={2}>{b.label}</Text>
          </BookmarkItem>
        ))}
        <Svg w={11} h={10}><path d="M1 1l4 4-4 4M6 1l4 4-4 4" stroke="#1b1008" strokeWidth="1.800" /></Svg>
        <Gap $w={19} />
        <Rule $h={17} $color="#e7651c" />
        <Gap $w={17} />
        <Svg w={19} h={15}><path d="M1.200 2.500a1 1 0 0 1 1-1h4.600l2 2h8a1 1 0 0 1 1 1v8a1 1 0 0 1-1 1H2.200a1 1 0 0 1-1-1z" stroke="#6d4a1e" strokeWidth="1.700" /></Svg>
        <Gap $w={7} />
        <Text size={12.2} w={81} top={2}>All Bookmarks</Text>
      </Bookmarks>

      <Viewport>
        <Document>
          <SiteHeader>
            <Text size={19.500} w={120} top={2} color="#1d2125">moodlecsubb</Text>
            <Spacer />
            <Rule $h={24} $w={1} $color="#dee2e6" />
            <Gap $w={13} />
            <FaRegBell size={18} />
            <Gap $w={16} />
            <FaRegComment size={18} />
            <Gap $w={17} />
            <Text size={15.500} w={82} top={-2}>Vivian Kulik</Text>
            <UserInitials><Text size={15.500} w={19} top={1}>VK</Text></UserInitials>
            <Gap $w={8.5} />
            <Svg w={10} h={7}><path d="M1 1.200l4 4 4-4" stroke="#555c63" strokeWidth="1.800" /></Svg>
            <Gap $w={25} />
          </SiteHeader>
          <Body>
            <Question>
              <InfoColumn />
              <QuestionColumn>
                <Formulation $h={294} $cut>
                  <ReluFigure />
                  <Choices top={53.5} items={[{ label: "Adevarat", w: 62.5, on: true }, { label: "Fals", w: 26 }]} />
                </Formulation>
                <CorrectNote answer="Adevarat" w={63} />
              </QuestionColumn>
            </Question>
            <Question>
              <InfoColumn>
                <InfoCard>
                  <InfoLine $h={40}>
                    <Text size={12.800} w={48} top={4} color="#6a737b">Question</Text>
                    <Gap $w={5} />
                    <Text size={19} w={22} weight={700} top={-2}>10</Text>
                  </InfoLine>
                  <InfoLine $h={14}><Text size={12.800} w={41}>Correct</Text></InfoLine>
                  <InfoLine $h={43}><Text size={12.800} w={92}>Mark 100.00 out</Text></InfoLine>
                  <InfoLine $h={0}><Text size={12.800} w={52} top={-5}>of 100.00</Text></InfoLine>
                  <InfoLine $h={50}>
                    <Svg w={11} h={13}><path d="M1 1l3.400 11.500M1.300 1.500L10 2.300 6 6.800l-3.300-.3" stroke="#777c81" strokeWidth="1.400" /></Svg>
                    <Gap $w={6} />
                    <Text size={12.800} w={76} top={1} color="#2a68b4">Flag question</Text>
                  </InfoLine>
                </InfoCard>
              </InfoColumn>
              <QuestionColumn>
                <Formulation $h={230}>
                  <InfoLine $h={50}><Text size={15.500} w={550} top={2}>În cadrul unei probleme de regresie logistică, output-ul ia valori din intervalul:</Text></InfoLine>
                  <Choices
                    top={10.3}
                    items={[
                      { label: "[-1, 1]", w: 40 },
                      { label: "[0, ∞]", w: 39 },
                      { label: "[0, 1]", w: 34, on: true },
                      { label: "[-∞, ∞]", w: 49 },
                    ]}
                  />
                </Formulation>
                <CorrectNote />
              </QuestionColumn>
            </Question>
          </Body>
        </Document>
        <ScrollTrack>
          <ScrollArrow />
          <Thumb />
          <ScrollArrow $down />
        </ScrollTrack>
      </Viewport>

      <Taskbar>
        <WeatherIcon />
        <Gap $w={8} />
        <TwoLines>
          <ShortLine><Text size={12} w={54}>Light rain</Text></ShortLine>
          <ShortLine><Text size={12} w={94} color="#c9c5c7">In the afternoon</Text></ShortLine>
        </TwoLines>
        <Gap $w={234} />
        <StartIcon />
        <Gap $w={14} />
        <SearchPill>
          <Svg w={17} h={17}>
            <circle cx="7" cy="7" r="5.600" stroke="#eee" strokeWidth="1.800" />
            <path d="M11 11l4.500 4.500" stroke="#eee" strokeWidth="2" strokeLinecap="round" />
          </Svg>
          <Gap $w={10} />
          <Text size={14} w={44} color="#d3cdcd">Search</Text>
          <Spacer />
          <WatchIcon />
        </SearchPill>
        <Gap $w={4} />
        <AppSlot><TaskViewIcon /></AppSlot>
        <AppSlot><EdgeIcon /><Running /></AppSlot>
        <AppSlot><ExplorerIcon /></AppSlot>
        <AppSlot><StoreIcon /></AppSlot>
        <AppSlot><LetterTile>D</LetterTile></AppSlot>
        <AppSlot $active><ChromeIcon /><Badge $bg="#33691e" $fg="#dfe8d8">R</Badge><Running $active /></AppSlot>
        <AppSlot><FaSpotify size={26} color="#1fd65f" /></AppSlot>
        <AppSlot><TodoIcon /></AppSlot>
        <AppSlot><UbuntuIcon /></AppSlot>
        <AppSlot><TeamsIcon /><NewPill $bg="#3fd9e3" $w={18}>NEW</NewPill></AppSlot>
        <AppSlot><WordIcon /><Running /></AppSlot>
        <AppSlot><FaWhatsapp size={28} color="#2bd45f" /><Badge $bg="#f4826a" $fg="#2a1010">7</Badge><Running /></AppSlot>
        <Spacer />
        <Svg w={12} h={8}><path d="M1 6.500l5-5 5 5" stroke="#fff" strokeWidth="1.600" /></Svg>
        <Gap $w={20} />
        <CloudIcon />
        <Gap $w={16} />
        <WifiIcon />
        <Gap $w={8.500} />
        <MutedIcon />
        <Gap $w={8} />
        <BatteryIcon />
        <Gap $w={17} />
        <TwoLines $right>
          <ShortLine><Text size={12} w={54}>11:45 AM</Text></ShortLine>
          <ShortLine><Text size={12} w={59}>6/11/2024</Text></ShortLine>
        </TwoLines>
        <Gap $w={9.500} />
        <AlertBell />
        <Gap $w={19} />
        <Copilot>
          <CopilotMark />
          <PrePill $bg="#ffc21c" $w={19}>PRE</PrePill>
        </Copilot>
        <Gap $w={20} />
      </Taskbar>
    </Screen>
  );
}
